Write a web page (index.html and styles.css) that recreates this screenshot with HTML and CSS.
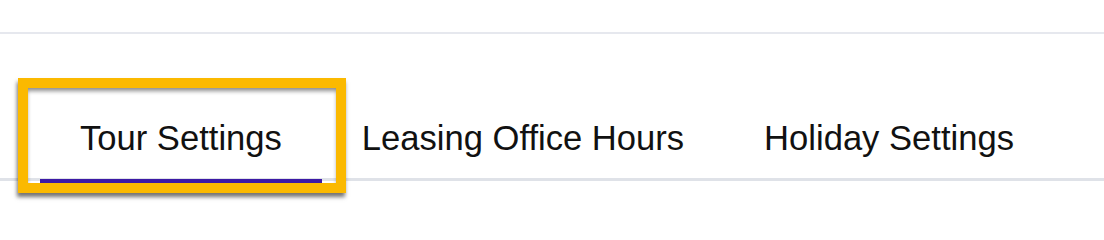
FILE: index.html
```html
<!DOCTYPE html>
<html lang="en">
<head>
<meta charset="utf-8">
<title>Tabs</title>
<link rel="stylesheet" href="styles.css">
</head>
<body>
<div class="page">
  <div class="top-divider"></div>
  <nav class="tabs">
    <div class="tab active">Tour Settings</div>
    <div class="tab">Leasing Office Hours</div>
    <div class="tab">Holiday Settings</div>
  </nav>
  <div class="highlight"></div>
</div>
</body>
</html>
```

FILE: styles.css
```css
html, body {
  margin: 0;
  padding: 0;
  background: #ffffff;
}

.page {
  position: relative;
  width: 1104px;
  height: 214px;
  overflow: hidden;
  font-family: "Liberation Sans", Arial, sans-serif;
}

.top-divider {
  margin-top: 32px;
  height: 2px;
  background: #e6e8ee;
}

.tabs {
  display: flex;
  margin-top: 84px;
  padding-left: 40px;
  border-bottom: 3px solid #dfe2e8;
}

.tab {
  position: relative;
  padding: 0 40px 20px;
  font-size: 34.6px;
  line-height: 40px;
  color: #111111;
  white-space: nowrap;
}

.tab.active::after {
  content: "";
  position: absolute;
  left: 0;
  right: 0;
  bottom: -5px;
  height: 4px;
  background: #3d1aa6;
}

.highlight {
  position: absolute;
  left: 18px;
  top: 78px;
  width: 308px;
  height: 95px;
  border: 10px solid #fbb900;
  box-shadow: -1px 4px 4px rgba(0, 0, 0, 0.55), inset 0 4px 4px -1px rgba(0, 0, 0, 0.45);
}
```
